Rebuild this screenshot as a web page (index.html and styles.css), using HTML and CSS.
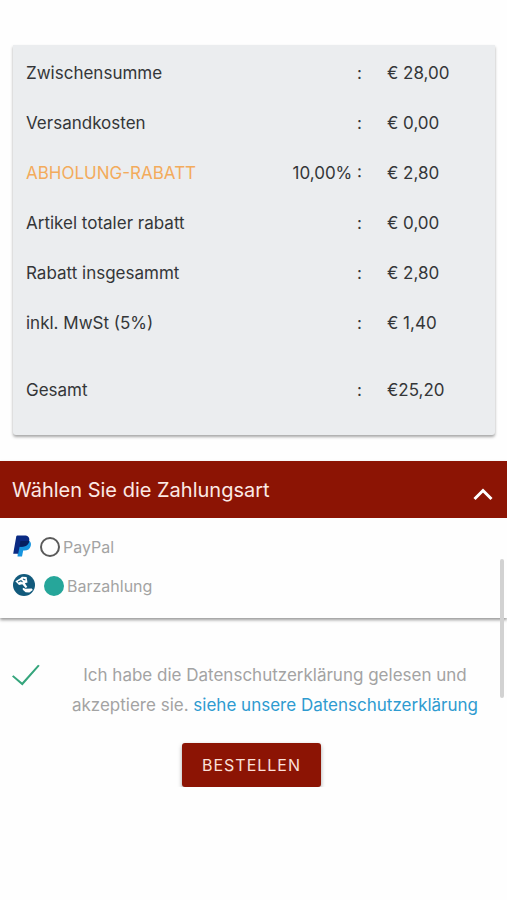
FILE: index.html
```
<!DOCTYPE html>
<html lang="de">
<head>
<meta charset="utf-8">
<meta name="viewport" content="width=device-width, initial-scale=1">
<title>Bestellung</title>
<link rel="stylesheet" href="styles.css">
</head>
<body>
<main class="checkout">
  <section class="summary">
    <table class="totals">
      <tbody>
        <tr><th scope="row">Zwischensumme</th><td class="rate">:</td><td class="amount">€ 28,00</td></tr>
        <tr><th scope="row">Versandkosten</th><td class="rate">:</td><td class="amount">€ 0,00</td></tr>
        <tr><th scope="row" class="discount">ABHOLUNG-RABATT</th><td class="rate">10,00% :</td><td class="amount">€ 2,80</td></tr>
        <tr><th scope="row">Artikel totaler rabatt</th><td class="rate">:</td><td class="amount">€ 0,00</td></tr>
        <tr><th scope="row">Rabatt insgesammt</th><td class="rate">:</td><td class="amount">€ 2,80</td></tr>
        <tr><th scope="row">inkl. MwSt (5%)</th><td class="rate">:</td><td class="amount">€ 1,40</td></tr>
      </tbody>
      <tfoot>
        <tr><th scope="row">Gesamt</th><td class="rate">:</td><td class="amount">€25,20</td></tr>
      </tfoot>
    </table>
  </section>

  <section class="payment">
    <button type="button" class="payment-header" aria-expanded="true">
      <span>Wählen Sie die Zahlungsart</span>
      <svg class="chevron" viewBox="0 0 20 14" aria-hidden="true"><path d="M1.500 12 10 3.500 18.500 12"/></svg>
    </button>
    <div class="payment-options">
      <div class="option">
        <svg class="option-icon paypal" viewBox="0 0 18 22" aria-hidden="true">
          <path fill="#1694df" d="M6 6h10.500c1.500 1.300 1.700 3 1.200 5-.8 3.300-3 4.600-6.200 4.600h-1.300L9 21.500H4.500z"/>
          <path fill="#0a2a83" d="M3.300 1.200Q3.500.4 4.400.4h6.700c4.100 0 5.800 2 5.100 5.600-.8 4-3.400 5.700-7.300 5.700H6.600L5.200 18.800H.2z"/>
          <path fill="#062060" d="M7.400 6h8.800c-.8 4-3.400 5.700-7.300 5.700H6.600z"/>
        </svg>
        <input type="radio" name="payment" id="pay-paypal">
        <label for="pay-paypal">PayPal</label>
      </div>
      <div class="option">
        <svg class="option-icon cash" viewBox="0 0 22 22" aria-hidden="true">
          <circle cx="11" cy="11" r="11" fill="#125a7c"/>
          <path fill="#fff" d="M2.300 7.200 7 4.500l2-1.700 4.600.2.900 5.400-2.600.9 2.400 3.600-1.700 1.200-3.300-3.800-3.300.8z"/>
          <path fill="#fff" d="M9.800 13.800 12.500 14.800l6.300-.2 1 1.400-3.400 2.600-3.800-.3-2.800-2.500z"/>
          <path fill="none" stroke="#125a7c" stroke-width="1.100" d="m5 8 3-1.300 1.500 1.300M10 5l2.400 1"/>
        </svg>
        <input type="radio" name="payment" id="pay-cash" checked>
        <label for="pay-cash">Barzahlung</label>
      </div>
    </div>
  </section>

  <form class="confirm">
    <div class="consent">
      <input type="checkbox" id="privacy" checked>
      <p><label for="privacy">Ich habe die Datenschutzerklärung gelesen und akzeptiere sie.</label> <a href="#datenschutz">siehe unsere Datenschutzerklärung</a></p>
    </div>
    <button type="button" class="submit">BESTELLEN</button>
  </form>
</main>
<div class="scroll-thumb" aria-hidden="true"></div>
</body>
</html>
```
FILE: styles.css
```
* {
  box-sizing: border-box;
}

body {
  margin: 0;
  background: #fefefe;
  color: #343638;
  font-family: Inter, "Liberation Sans", sans-serif;
  font-size: 17px;
  line-height: 30px;
}

.checkout {
  padding-top: 45px;
}

.summary {
  margin: 0 12px 26px 13px;
  padding: 3px 13px 20px;
  background: #ebedef;
  border-radius: 0 0 3px 3px;
  box-shadow: 0 2px 3px rgba(0, 0, 0, 0.35);
}

.totals {
  width: 100%;
  border-collapse: collapse;
  table-layout: fixed;
}

.totals th,
.totals td {
  padding: 10px 0;
  font-weight: 400;
  text-align: left;
}

.totals th {
  width: 48%;
}

.totals .rate {
  text-align: right;
}

.totals .amount {
  width: 120px;
  padding-left: 25px;
}

.totals .discount {
  color: #f3ab5c;
}

.totals tfoot th,
.totals tfoot td {
  padding-top: 27px;
}

.payment {
  box-shadow: 0 2px 3px rgba(0, 0, 0, 0.4);
}

.payment-header {
  display: flex;
  align-items: center;
  justify-content: space-between;
  width: 100%;
  height: 57px;
  padding: 0 14px 0 12px;
  border: 0;
  background: #8c1404;
  color: #fbe9e4;
  font: inherit;
  font-size: 20px;
}

.chevron {
  width: 20px;
  height: 14px;
  margin-top: 8px;
  fill: none;
  stroke: #fff;
  stroke-width: 3;
}

.payment-options {
  display: grid;
  gap: 9px;
  padding: 14px 13px 17px;
  font-size: 16px;
}

.option {
  display: flex;
  align-items: center;
  color: #a3a3a3;
}

.option-icon {
  height: 22px;
  margin: 0 9px 2px 0;
}

.paypal {
  width: 18px;
}

.cash {
  width: 22px;
}

.option input {
  appearance: none;
  width: 20px;
  height: 20px;
  margin: 0 3px 0 0;
  border: 2px solid #5a5a5a;
  border-radius: 50%;
}

.option input:checked {
  border-color: #26a69a;
  background: #26a69a;
}

.confirm {
  display: flex;
  flex-direction: column;
  align-items: center;
  gap: 23px;
  padding: 42px 16px 0 12px;
}

.consent {
  display: flex;
  width: 100%;
  color: #a3a3a3;
}

.consent input {
  appearance: none;
  flex: none;
  width: 28px;
  height: 22px;
  margin: 4px 22px 0 0;
  border: 1px solid #a3a3a3;
}

.consent input:checked {
  border: 0;
  background: #35a57c;
  clip-path: polygon(0 57%, 5% 51%, 36% 84%, 93% 3%, 99% 8%, 37% 98%);
}

.consent p {
  flex: 1;
  margin: 0 3px 0 0;
  text-align: center;
}

.consent a {
  color: #2e9bd0;
  text-decoration: none;
}

.submit {
  height: 44px;
  padding: 0 20px;
  border: 0;
  border-radius: 3px;
  background: #8c1404;
  box-shadow: 0 2px 4px rgba(0, 0, 0, 0.35);
  color: #fbe0da;
  font: inherit;
  font-size: 16px;
  letter-spacing: 1px;
}

.scroll-thumb {
  position: absolute;
  top: 559px;
  right: 3px;
  width: 4px;
  height: 139px;
  border-radius: 2px;
  background: #d2d2d2;
}
```
